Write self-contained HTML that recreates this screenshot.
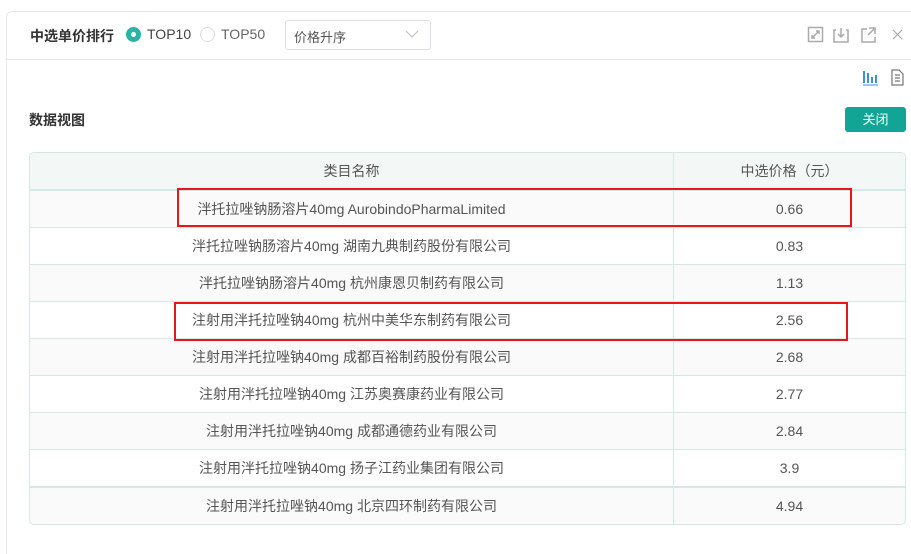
<!DOCTYPE html>
<html><head><meta charset="utf-8"><style>
*{margin:0;padding:0;box-sizing:border-box}
html,body{width:911px;height:554px;overflow:hidden}
body{background:#fff;font-family:"Liberation Sans","Noto Sans CJK SC",sans-serif;position:relative;color:#555}
.panel{position:absolute;left:6px;top:11px;width:905px;height:543px;border:1px solid #e8e8e8;border-right:none;border-bottom:none;border-radius:6px 0 0 0}
.hdr{position:absolute;left:6px;top:59px;width:905px;border-top:1px solid #e8e8e8}
.abs{position:absolute}
.radio{position:absolute;width:15px;height:15px;border-radius:50%}
table{position:absolute;left:29px;top:152px;width:877px;border-collapse:separate;border-spacing:0;border:1px solid #d5e8e4;border-radius:5px;overflow:hidden;font-size:14px}
td,th{height:37px;text-align:center;border-bottom:1px solid #d5e8e4;font-weight:normal;color:#555}
th{background:#f3f8f7;height:38px;border-bottom:2px solid #d5e8e4;font-size:14px}
td:first-child,th:first-child{border-right:1px solid #d5e8e4;width:644px}
tr:last-child td{border-bottom:none}
tr.g td{background:#fafafa}
.red{position:absolute;border:2px solid #e8161b}
</style></head><body>
<div class="panel"></div>
<div class="hdr"></div>
<div class="abs" style="left:30px;top:26px;font-size:14px;font-weight:bold;color:#333">中选单价排行</div>
<div class="radio" style="left:126px;top:27px;background:#2bb3a5"><div style="position:absolute;left:5px;top:5px;width:5px;height:5px;border-radius:50%;background:#fff"></div></div>
<div class="abs" style="left:147px;top:26px;font-size:14px;color:#444">TOP10</div>
<div class="radio" style="left:200px;top:27px;border:1px solid #ddd"></div>
<div class="abs" style="left:221px;top:26px;font-size:14px;color:#666">TOP50</div>
<div class="abs" style="left:285px;top:20px;width:146px;height:30px;border:1px solid #dcdfe6;border-radius:3px"></div>
<div class="abs" style="left:294px;top:27px;font-size:13px;color:#555">价格升序</div>
<svg class="abs" style="left:405px;top:29px" width="14" height="10"><path d="M1 2l6 6 6-6" stroke="#bbb" fill="none"/></svg>
<svg class="abs" style="left:807px;top:26px" width="100" height="18" fill="none" stroke="#aaa" stroke-width="1.5">
<rect x="1.5" y="1.5" width="14" height="14"/><path d="M5 12l7-7M9 5h3v3M5 9v3h3"/>
<path d="M29 4h-2v12h14V4h-2M34 2v9M31 8l3 3 3-3"/>
<path d="M60 3h-5v13h13v-5M62 2h6v6M68 2l-7 7"/>
<path d="M86 4l9 9M95 4l-9 9" stroke-width="1.2"/>
</svg>
<svg class="abs" style="left:862px;top:68px" width="46" height="18" fill="none">
<path d="M2 3v12M6 5v10M10 9v6M14 7v8" stroke="#3c8ed8" stroke-width="2"/><path d="M1 17h15" stroke="#3c8ed8"/>
<path d="M30 2h7l4 4v11H30z M33 7h5M33 10h5M33 13h5" stroke="#777" stroke-width="1.2"/>
</svg>
<div class="abs" style="left:29px;top:110px;font-size:14px;font-weight:bold;color:#333">数据视图</div>
<div class="abs" style="left:845px;top:107px;width:61px;height:25px;background:#12a595;border-radius:3px;color:#fff;font-size:13px;text-align:center;line-height:25px">关闭</div>
<table>
<tr><th>类目名称</th><th>中选价格（元）</th></tr>
<tr class="g"><td>泮托拉唑钠肠溶片40mg AurobindoPharmaLimited</td><td>0.66</td></tr>
<tr><td>泮托拉唑钠肠溶片40mg 湖南九典制药股份有限公司</td><td>0.83</td></tr>
<tr class="g"><td>泮托拉唑钠肠溶片40mg 杭州康恩贝制药有限公司</td><td>1.13</td></tr>
<tr><td>注射用泮托拉唑钠40mg 杭州中美华东制药有限公司</td><td>2.56</td></tr>
<tr class="g"><td>注射用泮托拉唑钠40mg 成都百裕制药股份有限公司</td><td>2.68</td></tr>
<tr><td>注射用泮托拉唑钠40mg 江苏奥赛康药业有限公司</td><td>2.77</td></tr>
<tr class="g"><td>注射用泮托拉唑钠40mg 成都通德药业有限公司</td><td>2.84</td></tr>
<tr><td>注射用泮托拉唑钠40mg 扬子江药业集团有限公司</td><td>3.9</td></tr>
<tr class="g"><td style="border-top:1px solid #d5e8e4">注射用泮托拉唑钠40mg 北京四环制药有限公司</td><td style="border-top:1px solid #d5e8e4">4.94</td></tr>
</table>
<div class="red" style="left:177px;top:188px;width:675px;height:39px"></div>
<div class="red" style="left:174px;top:302px;width:674px;height:39px"></div>
</body></html>
